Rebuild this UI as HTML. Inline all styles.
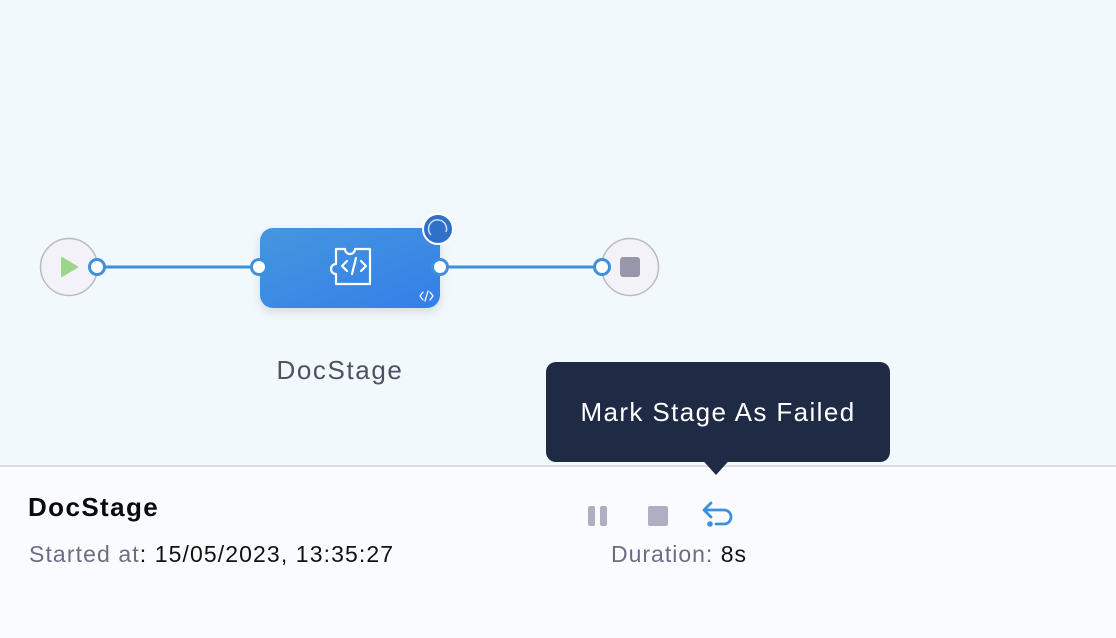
<!DOCTYPE html>
<html><head><style>
body{margin:0;width:1116px;height:636px;overflow:hidden;font-family:"Liberation Sans",sans-serif;position:relative;background:#f1f9fc}
.bottom{position:absolute;left:0;top:465px;width:1116px;height:171px;background:#fafbfe;border-top:2px solid #d9dae6}
.t{position:absolute;white-space:nowrap}
</style></head><body>
<svg width="1116" height="465" style="position:absolute;left:0;top:0">
<defs><linearGradient id="g" x1="0" y1="0" x2="1" y2="1"><stop offset="0" stop-color="#4596de"/><stop offset="1" stop-color="#337fe9"/></linearGradient>
<filter id="s" x="-20%" y="-20%" width="140%" height="160%"><feDropShadow dx="0" dy="4" stdDeviation="5" flood-color="#000" flood-opacity="0.12"/></filter></defs>
<line x1="97" y1="267" x2="602" y2="267" stroke="#3d91dc" stroke-width="3"/>
<circle cx="69" cy="267" r="28.5" fill="#f3f2f9" stroke="#b9b9c9" stroke-width="1.5"/>
<path d="M62 258 L77 267 L62 276 Z" fill="#9cd68a" stroke="#9cd68a" stroke-width="2" stroke-linejoin="round"/>
<circle cx="630" cy="267" r="28.5" fill="#f3f2f9" stroke="#b9b9c9" stroke-width="1.5"/>
<rect x="620" y="257" width="20" height="20" rx="3" fill="#9896ab"/>
<rect x="260" y="228" width="180" height="80" rx="13" fill="url(#g)" filter="url(#s)"/>
<g fill="none" stroke="#fff" stroke-width="2.2" stroke-linejoin="round" stroke-linecap="round">
<path d="M336 249 h9 a5 5 0 0 0 10 0 h15 v35 h-34 v-10 a5 5 0 0 1 0 -10 z"/>
<path d="M347 261 l-5 5 l5 5 M361 261 l5 5 l-5 5 M356 258 l-4 16"/>
<path d="M423 292 l-3 4 l3 4 M430 292 l3 4 l-3 4 M428 291 l-3 10" stroke-width="1.3"/>
</g>
<circle cx="97" cy="267" r="7.5" fill="#fff" stroke="#3d91dc" stroke-width="3"/>
<circle cx="259" cy="267" r="7.5" fill="#fff" stroke="#3d91dc" stroke-width="3"/>
<circle cx="440" cy="267" r="7.5" fill="#fff" stroke="#3d91dc" stroke-width="3"/>
<circle cx="602" cy="267" r="7.5" fill="#fff" stroke="#3d91dc" stroke-width="3"/>
<circle cx="438" cy="229" r="15" fill="#2f71c9" stroke="#fff" stroke-width="2"/>
<path d="M431 235 A9 9 0 1 1 446 232" fill="none" stroke="#cfe0f5" stroke-width="1.5"/>
</svg>
<div class="t" style="left:240px;top:355px;width:200px;text-align:center;font-size:26px;letter-spacing:1.6px;color:#4f5162">DocStage</div>
<div class="bottom"></div>
<div class="t" style="left:28px;top:492px;font-size:26px;letter-spacing:1.4px;font-weight:bold;color:#0b0b0d">DocStage</div>
<div class="t" style="left:29px;top:541px;font-size:23px;letter-spacing:1.1px;color:#111"><span style="color:#6b6d85">Started at</span>: 15/05/2023, 13:35:27</div>
<div class="t" style="left:611px;top:541px;font-size:23px;letter-spacing:1px;color:#111"><span style="color:#6b6d85">Duration:</span> 8s</div>
<svg width="200" height="40" style="position:absolute;left:570px;top:497px">
<rect x="18" y="9" width="7" height="20" rx="2" fill="#afafc3"/>
<rect x="30" y="9" width="7" height="20" rx="2" fill="#afafc3"/>
<rect x="78" y="9" width="20" height="20" rx="2" fill="#afafc3"/>
<g fill="none" stroke="#3d91dc" stroke-width="2.8" stroke-linecap="round" stroke-linejoin="round">
<path d="M141 6 l-7 7 l7 7 M134 13 h20 a7 7 0 0 1 0 14 h-8"/>
</g>
<circle cx="140" cy="27" r="2.8" fill="#3d91dc"/>
</svg>
<div style="position:absolute;left:546px;top:362px;width:344px;height:100px;background:#1f2a45;border-radius:10px"></div>
<div style="position:absolute;left:698px;top:455px;width:0;height:0;border-left:18px solid transparent;border-right:18px solid transparent;border-top:20px solid #1f2a45"></div>
<div class="t" style="left:546px;top:397px;width:344px;text-align:center;font-size:26px;letter-spacing:1.4px;color:#fff">Mark Stage As Failed</div>
</body></html>
